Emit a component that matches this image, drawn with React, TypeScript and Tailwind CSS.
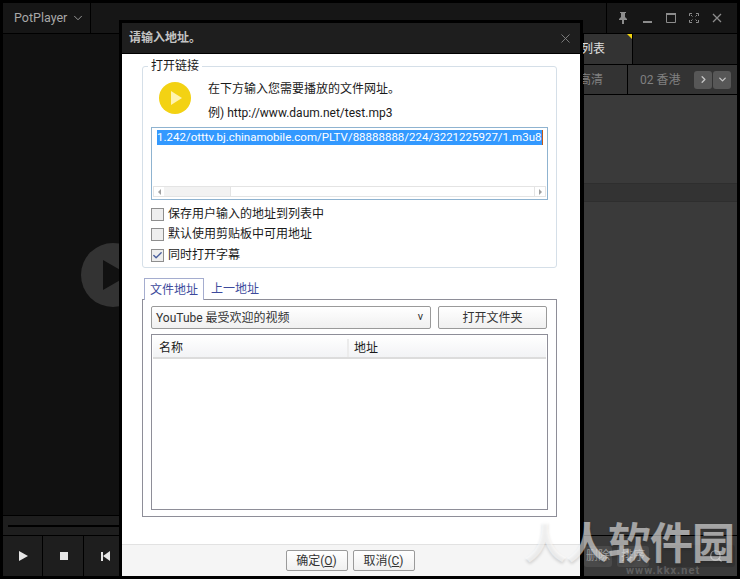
import { Check, ChevronDown, ChevronRight, Search, X } from "lucide-react";

const font = { fontFamily: 'Roboto, "Noto Sans CJK SC", sans-serif' };

const TitleBar = () => (
  <div className="flex h-[31px] shrink-0 border-b border-black bg-[#161616]">
    <div className="flex w-[88px] items-center gap-[4px] border-r border-black pl-[11px] text-[12.5px] text-[#a8a8a8]">
      PotPlayer
      <ChevronDown className="h-[14px] w-[14px]" strokeWidth={1.5} />
    </div>
    <div className="flex-1" />
    <div className="flex w-[131px] items-center border-l border-black pl-[11px] text-[#8c8c8c]">
      <svg width="10" height="12" viewBox="0 0 10 12" className="mr-[15px] fill-current">
        <path d="M2 0h6v1H7v4l2 2v1H6v4H4V8H1V7l2-2V1H2z" />
      </svg>
      <svg width="9" height="12" viewBox="0 0 9 12" className="mr-[14px] fill-current">
        <rect x="0" y="9" width="9" height="2" />
      </svg>
      <svg width="10" height="10" viewBox="0 0 10 10" className="mr-[13px] fill-none stroke-current">
        <path d="M.5 1.5h9v8h-9z" />
        <path d="M0 1h10" strokeWidth="2" />
      </svg>
      <svg width="10" height="10" viewBox="0 0 10 10" className="mr-[13px] fill-none stroke-current">
        <path d="M.5 3V.5H3M7 .5h2.500V3M9.500 7v2.500H7M3 9.500H.5V7M2 2l1.500 1.500M8 2 6.500 3.500M8 8 6.500 6.500M2 8l1.500-1.500" />
      </svg>
      <svg width="10" height="10" viewBox="0 0 10 10" className="fill-none stroke-current" strokeWidth="1.3">
        <path d="M1 1l8 8M9 1 1 9" />
      </svg>
    </div>
  </div>
);

const LeftPane = () => (
  <div className="flex w-[580px] flex-col">
    <div className="flex flex-1 items-center justify-center bg-[#111111]">
      <div className="mr-[360px] flex h-[64px] w-[64px] items-center justify-center rounded-full bg-[#333333]">
        <div className="ml-[6px] h-0 w-0 border-y-[15px] border-l-[26px] border-y-transparent border-l-[#111111]" />
      </div>
    </div>
    <div className="flex h-[21px] flex-col justify-center border-y border-black bg-[#1e1e1e] pl-[5px]">
      <div className="h-[2px] bg-black" />
    </div>
    <div className="flex h-[40px] bg-[#1e1e1e]">
      <div className="flex w-[40px] items-center justify-center border-r border-black pl-[2px]">
        <div className="h-0 w-0 border-y-[5px] border-l-[9px] border-y-transparent border-l-[#e6e6e6]" />
      </div>
      <div className="flex w-[41px] items-center justify-center border-r border-black pl-[1px]">
        <div className="h-[8px] w-[8px] bg-[#e6e6e6]" />
      </div>
      <div className="flex w-[41px] items-center justify-center pl-[1px]">
        <div className="h-[9px] w-[2px] bg-[#e6e6e6]" />
        <div className="h-0 w-0 border-y-[5px] border-r-[7px] border-y-transparent border-r-[#e6e6e6]" />
      </div>
    </div>
  </div>
);

const RightPane = () => (
  <div className="flex flex-1 flex-col border-l border-black bg-[#3a3a3a]">
    <div className="flex h-[30px] shrink-0 bg-[#1e1e1e]">
      <div className="relative flex w-[49px] items-center justify-end border-r border-black bg-[#333333] pr-[27px] text-[12px] text-[#e0e0e0]">
        <span className="whitespace-nowrap">列表</span>
        <div className="absolute right-0 top-0 h-0 w-0 border-l-[5px] border-t-[5px] border-l-transparent border-t-[#f2d40f]" />
      </div>
    </div>
    <div className="flex h-[31px] shrink-0 items-center border-y border-black bg-[#333333] text-[12px] text-[#808080]">
      <div className="flex h-full w-[44px] items-center justify-end border-r border-black pr-[24px]">
        <span className="whitespace-nowrap">高清</span>
      </div>
      <div className="ml-[12px] w-[54px] whitespace-nowrap">02 香港</div>
      <div className="flex gap-px">
        <div className="flex h-[18px] w-[18px] items-center justify-center rounded-[3px] bg-[#575757] text-[#c4c4c4]">
          <ChevronRight className="h-[11px] w-[11px]" strokeWidth={3} />
        </div>
        <div className="flex h-[18px] w-[18px] items-center justify-center rounded-[3px] bg-[#575757] text-[#c4c4c4]">
          <ChevronDown className="h-[11px] w-[11px]" strokeWidth={3} />
        </div>
      </div>
    </div>
    <div className="mt-[88px] h-[19px] border-y border-[#2e2e2e] bg-[#333333]" />
    <div className="flex-1" />
    <div className="flex h-[41px] shrink-0 items-center gap-[5px] border-t border-black bg-[#3a3a3a] text-[12px] text-[#9a9a9a]">
      <div className="flex h-[21px] w-[28px] items-center justify-end rounded-[3px] bg-[#4a4a4a] pr-[2px]">删除</div>
      <div className="flex h-[21px] w-[32px] items-center justify-center rounded-[3px] bg-[#4a4a4a]">排序</div>
      <div className="ml-[5px] flex h-[22px] w-[76px] items-center justify-end rounded-[3px] bg-[#333333] pr-[12px]">
        <Search className="h-[14px] w-[14px]" />
      </div>
    </div>
  </div>
);

const CheckRow = ({ label, checked, className }: { label: string; checked?: boolean; className?: string }) => (
  <div className={`flex h-[14px] items-center gap-[4px] text-[12px] text-[#1a1a1a] ${className ?? ""}`}>
    <div className="flex h-[13px] w-[13px] items-center justify-center border border-[#8e8e8e] bg-[#eeeeee]">
      {checked && <Check className="h-[11px] w-[11px] text-[#4a5f9e]" strokeWidth={3} />}
    </div>
    {label}
  </div>
);

const Dialog = () => (
  <div className="absolute left-[119px] top-[20px] flex h-[559px] w-[464px] flex-col border-[3px] border-black bg-white">
    <div className="flex h-[31px] shrink-0 items-center justify-between border-b border-black bg-[#1e1e1e] pl-[7px] pr-[7px]">
      <span className="text-[12px] font-bold text-[#c4c4c4]">请输入地址。</span>
      <X className="h-[15px] w-[15px] text-[#808080]" strokeWidth={1.5} />
    </div>

    <div className="flex flex-1 flex-col pl-[20px] pr-[23px] pt-[12px]">
      <div className="relative h-[202px] rounded-[3px] border border-[#d5dfe8] px-[8px] pt-[14px]">
        <span className="absolute left-[5px] top-[-8px] bg-white px-[3px] text-[12px] leading-[15px] text-[#1a1a1a]">打开链接</span>
        <div className="flex h-[46px]">
          <div className="ml-[8px] mt-[1px] flex h-[32px] w-[32px] items-center justify-center rounded-full bg-[#f3d213]">
            <div className="ml-[3px] h-0 w-0 border-y-[7px] border-l-[11px] border-y-transparent border-l-[#fff3b0]" />
          </div>
          <div className="ml-[17px] flex flex-col gap-[8px] text-[12px] leading-[16px] text-[#1a1a1a]">
            <span>在下方输入您需要播放的文件网址。</span>
            <span>例) http://www.daum.net/test.mp3</span>
          </div>
        </div>
        <div className="flex h-[73px] w-[397px] flex-col border border-[#8fb3d0] pb-[2px]">
          <div className="px-[5px] pt-[2px]">
            <span className="block h-[15px] w-[386px] whitespace-nowrap border-r border-[#c25a1a] bg-[#3399ff] text-[11.5px] leading-[15px] text-white">
              1.242/otttv.bj.chinamobile.com/PLTV/88888888/224/3221225927/1.m3u8
            </span>
          </div>
          <div className="flex-1" />
          <div className="mx-[1px] flex h-[11px] items-center border border-[#e4e4e4]">
            <div className="flex w-[10px] justify-center">
              <div className="h-0 w-0 border-y-[3px] border-r-[3px] border-y-transparent border-r-[#a0a0a0]" />
            </div>
            <div className="h-full w-[66px] bg-[#f2f2f2]" />
            <div className="h-full flex-1 border-x border-[#e4e4e4]" />
            <div className="flex w-[10px] justify-center">
              <div className="h-0 w-0 border-y-[3px] border-l-[3px] border-y-transparent border-l-[#a0a0a0]" />
            </div>
          </div>
        </div>
        <div className="mt-[7px] flex flex-col gap-[6px]">
          <CheckRow label="保存用户输入的地址到列表中" />
          <CheckRow label="默认使用剪贴板中可用地址" />
          <CheckRow label="同时打开字幕" checked className="mt-[1px]" />
        </div>
      </div>

      <div className="mt-[10px] flex h-[22px] pl-[2px] text-[12px]">
        <div className="z-10 flex h-[22px] w-[60px] items-center justify-center border border-b-0 border-[#a5adcf] bg-white text-[#3d4a9c]">文件地址</div>
        <div className="flex h-[21px] items-center pl-[7px] text-[#3d4a9c]">上一地址</div>
      </div>
      <div className="mt-[-1px] flex h-[218px] flex-col border border-[#8e8e98] px-[8px] pt-[6px]">
        <div className="flex h-[23px] gap-[7px] text-[12px] text-[#333333]">
          <div className="flex w-[280px] items-center justify-between rounded-[2px] border border-[#9a9a9a] bg-gradient-to-b from-white to-[#f0f0f0] pl-[4px] pr-[7px]">
            <span>YouTube 最受欢迎的视频</span>
            <span className="text-[11px]">v</span>
          </div>
          <div className="flex w-[109px] items-center justify-center rounded-[2px] border border-[#9a9a9a] bg-gradient-to-b from-white to-[#f0f0f0]">打开文件夹</div>
        </div>
        <div className="mt-[5px] h-[176px] w-[397px] border border-[#8e8e98] p-px">
          <div className="flex h-[23px] border-b-2 border-[#dcdcdc] bg-gradient-to-b from-white to-[#f2f3f5] pt-[3px] text-[12px] leading-[18px] text-[#1a1a1a]">
            <div className="w-[196px] border-r-2 border-[#ececec] pl-[6px]">名称</div>
            <div className="pl-[5px]">地址</div>
          </div>
        </div>
      </div>
    </div>

    <div className="flex h-[32px] shrink-0 items-center justify-center gap-[4px] border-t border-[#e2e2e2] bg-[#f5f5f5] pr-[2px] text-[12px] text-[#333333]">
      <div className="flex h-[21px] w-[62px] items-center justify-center rounded-[2px] border border-[#9a9a9a] bg-gradient-to-b from-white to-[#f0f0f0]">确定(<span className="underline">O</span>)</div>
      <div className="ml-[1px] flex h-[21px] w-[62px] items-center justify-center rounded-[2px] border border-[#9a9a9a] bg-gradient-to-b from-white to-[#f0f0f0]">取消(<span className="underline">C</span>)</div>
    </div>
  </div>
);

export default function App() {
  return (
    <div className="relative flex h-[579px] w-[740px] flex-col overflow-hidden bg-black p-[3px]" style={font}>
      <TitleBar />
      <div className="flex flex-1">
        <LeftPane />
        <RightPane />
      </div>
      <Dialog />
      <div className="pointer-events-none absolute left-[524px] top-[519px] whitespace-nowrap text-[43px] font-bold leading-[50px] tracking-[-1px] text-white/55 [text-shadow:0_2px_3px_rgba(0,0,0,0.15)]">
        人人软件园
      </div>
      <div className="pointer-events-none absolute left-[626px] top-[564px] text-[11px] font-bold leading-[14px] tracking-[1px] text-white/20">
        www.kkx.net
      </div>
    </div>
  );
}
